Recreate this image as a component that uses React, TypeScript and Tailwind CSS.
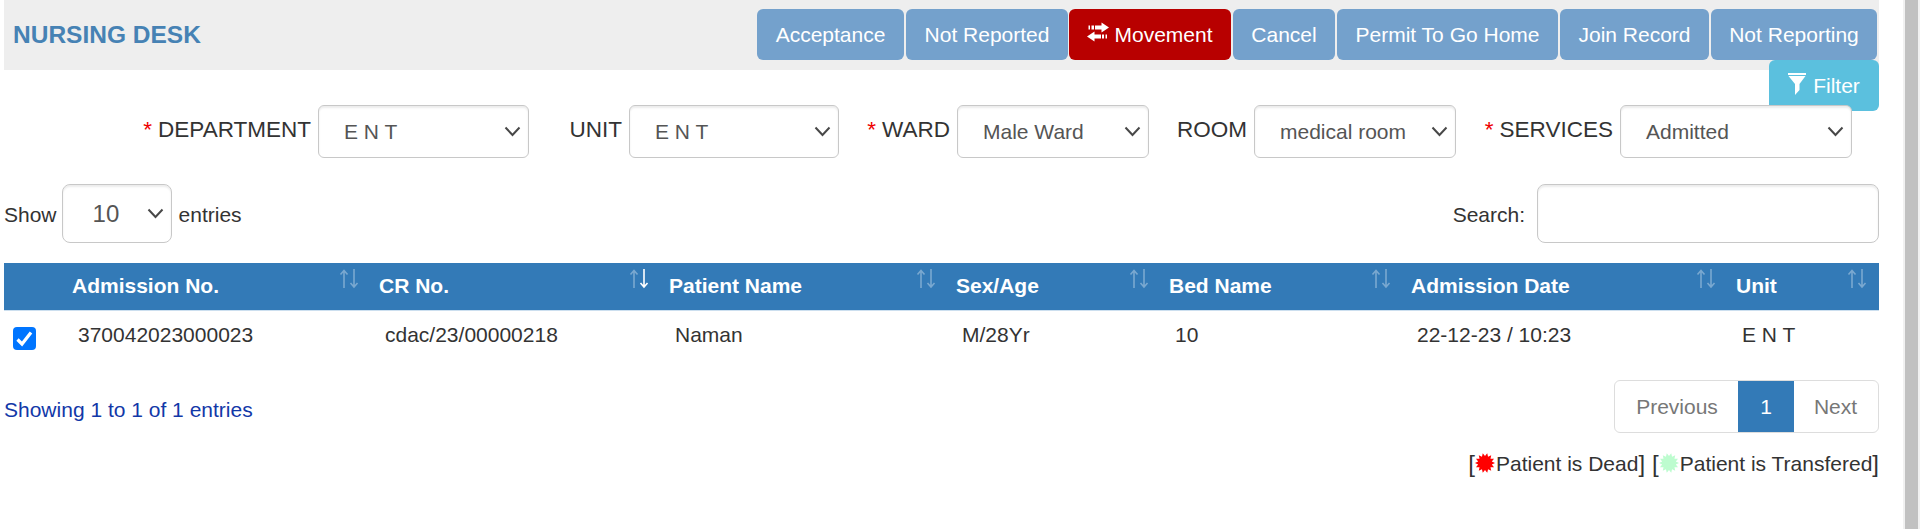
import React from "react";

function Chevron() {
  return (
    <svg className="h-[17px] w-[17px] shrink-0" viewBox="0 0 17 17" fill="none" stroke="#484848" strokeWidth="2">
      <path d="M1.500 4.500 8.500 12 15.500 4.500" />
    </svg>
  );
}

function Action({ className, children }: { className: string; children: React.ReactNode }) {
  return (
    <button
      className={`flex h-[51px] items-center justify-center rounded-[6px] text-[21px] whitespace-nowrap text-white ${className}`}
    >
      {children}
    </button>
  );
}

function Field({ label, value, required, className, box }: { label: string; value: string; required?: boolean; className: string; box: string }) {
  return (
    <div className={`flex shrink-0 items-start justify-end ${className}`}>
      <div className="flex h-[50px] items-center text-[22.5px] whitespace-nowrap">
        {required && <span className="mr-[6px] text-[#e00]">*</span>}
        <span>{label}</span>
      </div>
      <div
        className={`ml-[7px] flex h-[53px] shrink-0 items-center justify-between rounded-[6px] border border-[#c8c8c8] bg-white pr-[7px] pl-[25px] text-[21px] text-[#555] shadow-[inset_0_2px_2px_rgba(0,0,0,0.075)] ${box}`}
      >
        <span className="whitespace-pre">{value}</span>
        <Chevron />
      </div>
    </div>
  );
}

function Sort({ active }: { active?: boolean }) {
  return (
    <svg className="mt-[6px] h-[20px] w-[20px] shrink-0" viewBox="0 0 20 20" fill="none" strokeWidth="1.6">
      <path d="M5 19V1.500M1.500 5.500 5 1.500 8.500 5.500" stroke="#fff" strokeOpacity="0.35" />
      <path d="M15 0V18M11.500 14 15 18 18.500 14" stroke="#fff" strokeOpacity={active ? 1 : 0.35} />
    </svg>
  );
}

function Burst({ fill }: { fill: string }) {
  const points = Array.from({ length: 28 }, (_, i) => {
    const r = i % 2 ? 7 : 10;
    const a = ((i + 1) * Math.PI) / 14;
    return `${(10 + r * Math.sin(a)).toFixed(2)},${(10 - r * Math.cos(a)).toFixed(2)}`;
  }).join(" ");
  return (
    <svg className="mr-[1px] mb-[3px] h-[20px] w-[20px]" viewBox="0 0 20 20">
      <polygon points={points} fill={fill} />
    </svg>
  );
}

const columns = [
  { title: "Admission No.", value: "370042023000023", width: "w-[307px]" },
  { title: "CR No.", value: "cdac/23/00000218", width: "w-[290px]", active: true },
  { title: "Patient Name", value: "Naman", width: "w-[287px]" },
  { title: "Sex/Age", value: "M/28Yr", width: "w-[213px]" },
  { title: "Bed Name", value: "10", width: "w-[242px]" },
  { title: "Admission Date", value: "22-12-23 / 10:23", width: "w-[325px]" },
  { title: "Unit", value: "E N T", width: "w-[151px]" },
];

export default function App() {
  return (
    <div className="flex h-[529px] w-[1920px] justify-between overflow-hidden bg-white font-['Liberation_Sans',Arial,sans-serif] text-[21px] leading-[30px] text-[#333]">
      <main className="ml-[4px] w-[1875px]">
        <header className="flex h-[70px] items-start justify-between bg-[#eee]">
          <h1 className="mt-[20px] ml-[9px] text-[24.5px] font-bold text-[#4682b4]">NURSING DESK</h1>
          <div className="mt-[9px] mr-[2px] flex gap-[2px]">
            <Action className="w-[147px] bg-[#74a1cc]">Acceptance</Action>
            <Action className="w-[162px] bg-[#74a1cc]">Not Reported</Action>
            <Action className="-ml-px w-[162px] bg-[#b80000]">
              <svg className="mr-[5px] mb-[6px] h-[20px] w-[22px]" viewBox="0 0 22 20" fill="#fff">
                <path d="M1.500 3.500H3v4H1.500zM4.500 3.500H7v4H4.500zM8 3.500h6.500V.500l7.500 5-7.500 5V7.500H8zM0 14.500l7.500-5v3H14v4H7.500v3zM15 12.500h2v4h-2zM18.500 12.500H20v4h-1.500z" />
              </svg>
              Movement
            </Action>
            <Action className="w-[102px] bg-[#74a1cc]">Cancel</Action>
            <Action className="w-[221px] bg-[#74a1cc]">Permit To Go Home</Action>
            <Action className="w-[149px] bg-[#74a1cc]">Join Record</Action>
            <Action className="w-[166px] bg-[#74a1cc]">Not Reporting</Action>
          </div>
        </header>
        <div className="-mt-[10px] flex h-[51px] justify-end">
          <Action className="w-[110px] bg-[#5bc0de]">
            <svg className="mr-[7px] mb-[3px] h-[22px] w-[18px]" viewBox="0 0 18 22" fill="#fff">
              <path d="M0 0h18v2H0zM.500 3h17L11.500 11v6l-4.500 5V11z" />
            </svg>
            Filter
          </Action>
        </div>
        <div className="relative -mt-[6px] flex">
          <Field label="DEPARTMENT" value="E N T" required className="w-[525px]" box="w-[211px]" />
          <Field label="UNIT" value="E N T" className="w-[310px]" box="w-[210px]" />
          <Field label="WARD" value="Male Ward" required className="w-[310px]" box="w-[192px]" />
          <Field label="ROOM" value="medical room" className="w-[307px]" box="w-[202px]" />
          <Field label="SERVICES" value="Admitted" required className="w-[396px]" box="w-[232px]" />
        </div>
        <div className="mt-[26px] flex h-[59px] items-center justify-between">
          <div className="flex items-center">
            <span className="mt-[2px]">Show</span>
            <div className="mr-[7px] ml-[5px] flex h-[59px] w-[110px] items-center justify-between rounded-[8px] border border-[#c8c8c8] pr-[7px] pl-[30px] text-[24px] text-[#555] shadow-[inset_0_2px_2px_rgba(0,0,0,0.075)]">
              10
              <Chevron />
            </div>
            <span className="mt-[2px]">entries</span>
          </div>
          <div className="flex items-center">
            <span className="mt-[2px]">Search:</span>
            <div className="ml-[12px] h-[59px] w-[342px] rounded-[8px] border border-[#c8c8c8] shadow-[inset_0_2px_2px_rgba(0,0,0,0.075)]" />
          </div>
        </div>
        <div className="mt-[20px] flex h-[48px] border-b border-[#ccdfef] bg-[#337ab7] pl-[68px] font-bold text-white">
          {columns.map((c) => (
            <div key={c.title} className={`flex shrink-0 items-start justify-between pr-[20px] ${c.width}`}>
              <span className="mt-[8px]">{c.title}</span>
              <Sort active={c.active} />
            </div>
          ))}
        </div>
        <div className="flex h-[69px] items-start">
          <div className="w-[74px] shrink-0 pt-[16px] pl-[9px]">
            <svg className="h-[23px] w-[23px]" viewBox="0 0 23 23">
              <rect width="23" height="23" rx="4" fill="#0075ff" />
              <path d="M4.500 12.500 9 17 18 5.500" fill="none" stroke="#fff" strokeWidth="3.200" />
            </svg>
          </div>
          {columns.map((c) => (
            <div key={c.title} className={`mt-[9px] shrink-0 last:w-[130px] ${c.width}`}>
              {c.value}
            </div>
          ))}
        </div>
        <div className="flex justify-between">
          <p className="mt-[15px] text-[#1238a8]">Showing 1 to 1 of 1 entries</p>
          <div className="flex h-[53px] w-[265px] overflow-hidden rounded-[6px] border border-[#ddd] text-[#777]">
            <span className="flex w-[123px] items-center justify-center pl-px">Previous</span>
            <span className="-my-px flex w-[56px] items-center justify-center bg-[#337ab7] text-white">1</span>
            <span className="flex flex-1 items-center justify-center pr-px">Next</span>
          </div>
        </div>
        <div className="mt-[16px] flex items-center justify-end whitespace-nowrap">
          <span className="text-[24px]">[</span>
          <Burst fill="#ff0000" />
          <span>Patient is Dead</span>
          <span className="mr-[7px] text-[24px]">]</span>
          <span className="text-[24px]">[</span>
          <Burst fill="#bdfccf" />
          <span>Patient is Transfered</span>
          <span className="text-[24px]">]</span>
        </div>
      </main>
      <div className="h-full w-[17px] border-r-2 border-l-2 border-[#f1f1f1] bg-[#c1c1c1]" />
    </div>
  );
}
